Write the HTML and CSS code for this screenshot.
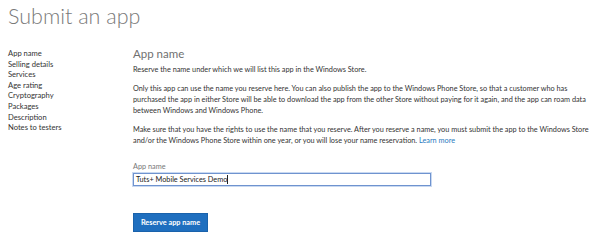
FILE: index.html
```html
<!DOCTYPE html>
<html>
<head>
<meta charset="utf-8">
<link rel="stylesheet" href="styles.css">
</head>
<body>
<h1 class="page-title">Submit an app</h1>
<div class="layout">
  <nav class="side-nav">
    <ul>
      <li>App name</li>
      <li>Selling details</li>
      <li>Services</li>
      <li>Age rating</li>
      <li>Cryptography</li>
      <li>Packages</li>
      <li>Description</li>
      <li>Notes to testers</li>
    </ul>
  </nav>
  <main class="content">
    <h2 class="section-title">App name</h2>
    <p class="para">Reserve the name under which we will list this app in the Windows Store.</p>
    <p class="para">Only this app can use the name you reserve here. You can also publish the app to the Windows Phone Store, so that a customer who has purchased the app in either Store will be able to download the app from the other Store without paying for it again, and the app can roam data between Windows and Windows Phone.</p>
    <p class="para">Make sure that you have the rights to use the name that you reserve. After you reserve a name, you must submit the app to the Windows Store and/or the Windows Phone Store within one year, or you will lose your name reservation. <a class="link" href="#">Learn more</a></p>
    <div class="field">
      <label class="field-label">App name</label>
      <div class="text-field">Tuts+ Mobile Services Demo<span class="caret"></span></div>
    </div>
    <button class="primary-btn">Reserve app name</button>
  </main>
</div>
</body>
</html>
```
FILE: styles.css
```css
html, body {
  margin: 0;
  padding: 0;
  background: #fff;
}
body {
  font-family: "Lato", "Open Sans", sans-serif;
  color: #333;
}
.page-title {
  margin: 0;
  padding: 2px 0 0 8px;
  height: 40px;
  font-family: "Lato", sans-serif;
  font-weight: 300;
  font-size: 21.5px;
  line-height: 28px;
  color: #7a7a7a;
}
.layout {
  display: flex;
}
.side-nav {
  width: 133px;
  flex: none;
  padding-left: 8px;
  box-sizing: border-box;
}
.side-nav ul {
  list-style: none;
  margin: 6px 0 0;
  padding: 0;
}
.side-nav li {
  font-size: 7.6px;
  line-height: 10.6px;
  color: #333;
}
.content {
  flex: 1;
  padding-right: 6px;
}
.section-title {
  margin: 5px 0 3px;
  font-weight: 400;
  font-size: 11.5px;
  line-height: 14px;
  color: #707070;
}
.para {
  margin: 0 0 8px;
  font-size: 7.3px;
  line-height: 11px;
  color: #333;
}
.link {
  color: #2a7bc0;
  text-decoration: none;
}
.field {
  margin-top: 16px;
  display: flex;
  flex-direction: column;
}
.field-label {
  font-size: 7.3px;
  line-height: 10px;
  color: #777;
}
.text-field {
  margin-top: 1px;
  width: 298px;
  height: 13px;
  box-sizing: border-box;
  border: 1px solid #6f93cf;
  box-shadow: 0 0 0 1px #c9d9f1;
  padding: 0 2px;
  font-size: 7.3px;
  line-height: 11px;
  color: #222;
  display: flex;
  align-items: center;
}
.caret {
  display: inline-block;
  width: 1px;
  height: 9px;
  background: #222;
}
.primary-btn {
  margin-top: 27px;
  width: 75px;
  height: 19px;
  border: 1px solid #1a62ab;
  background: #1f6fbf;
  color: #fff;
  font-family: "Lato", sans-serif;
  font-weight: 700;
  font-size: 7.3px;
  padding: 0;
  display: block;
}
```
